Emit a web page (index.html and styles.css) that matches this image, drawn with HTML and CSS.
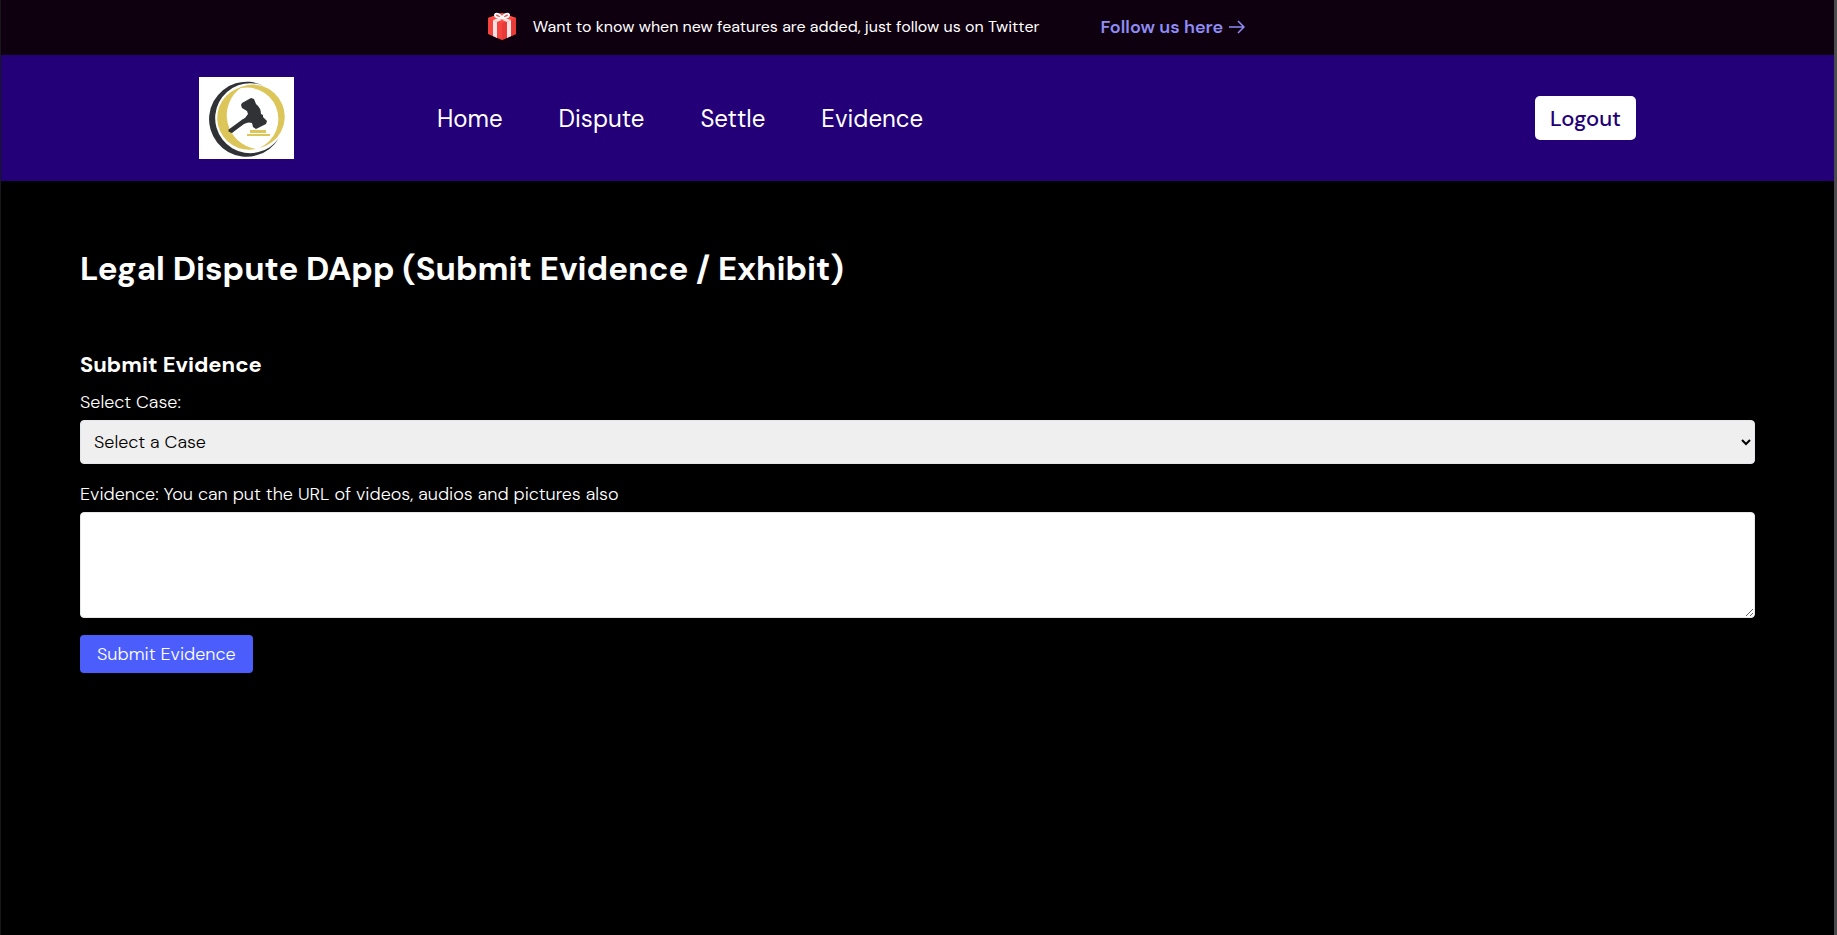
FILE: index.html
```html
<!DOCTYPE html>
<html lang="en">
<head>
<meta charset="utf-8">
<title>Legal Dispute DApp</title>
<link rel="stylesheet" href="styles.css">
</head>
<body>
<div class="page">
  <aside class="banner">
    <svg class="gift" viewBox="0 0 28 29" aria-hidden="true">
      <path fill="#f5443f" d="M0 6 14 1 28 6V22L14 28 0 22Z"/>
      <path fill="#e93a37" d="M14 11 28 6V22L14 28Z"/>
      <path fill="#fb4a42" d="M0 6 14 1 28 6 14 11Z"/>
      <path fill="#f6e3e3" d="M5 8 9 10V26L5 24ZM19 10 23 8V24L19 26Z"/>
      <path fill="#f6e3e3" d="M5 8 14 5 18 6 9 10ZM23 8 14 5 10 6 19 10Z"/>
      <path fill="none" stroke="#fff" stroke-width="2" stroke-linejoin="round" d="M14 6C10 6 7 5 7 3S12 1 14 6C16 1 21 1 21 3S18 6 14 6Z"/>
    </svg>
    <p class="banner-text">Want to know when new features are added, just follow us on Twitter</p>
    <a class="banner-link" href="#">Follow us here
      <svg class="arrow" viewBox="0 0 16 14" aria-hidden="true"><path d="M0 7H15M9 1 15 7 9 13"/></svg>
    </a>
  </aside>
  <header class="header">
    <div class="header-inner">
      <a class="logo" href="#" aria-label="Home page">
        <svg viewBox="0 0 95 82" aria-hidden="true">
          <path fill="#303236" d="M65 9A37.500 37.500 0 1 0 80 61A35 35 0 1 1 65 9Z"/>
          <path fill="#dcc65a" d="M36 13A32 32 0 1 1 60 71A31.200 31.200 0 1 0 36 13Z"/>
          <path fill="#dcc65a" d="M43 10A31.500 31.500 0 0 0 57 72A34 34 0 0 1 43 10Z"/>
          <path fill="#303236" d="M42 28 43 26 52 21 55 22 57 27Q62 31 62 37L64 38V40L68 44 67 47 57 52 54 50 53 46 47 45 33 56 32 55 29 55 32 53 46 41 49 37 48 34 43 31Z"/>
          <path fill="#303236" d="M29 53 44 42 50 40 53 44 45 47 32 56Z"/>
          <path fill="#dcc65a" d="M51 53H67V56H51ZM48 57H71V59H48Z"/>
        </svg>
      </a>
      <nav class="nav">
        <a href="#">Home</a>
        <a href="#">Dispute</a>
        <a href="#">Settle</a>
        <a href="#">Evidence</a>
      </nav>
      <button class="logout" type="button">Logout</button>
    </div>
  </header>
  <main class="content">
    <h1 class="title">Legal Dispute DApp (Submit Evidence / Exhibit)</h1>
    <form class="form">
      <h2 class="subtitle">Submit Evidence</h2>
      <label class="label" for="case">Select Case:</label>
      <select class="field select" id="case"><option>Select a Case</option></select>
      <label class="label" for="evidence">Evidence: You can put the URL of videos, audios and pictures also</label>
      <textarea class="field textarea" id="evidence"></textarea>
      <button class="submit" type="button">Submit Evidence</button>
    </form>
  </main>
</div>
</body>
</html>
```
FILE: styles.css
```css
* { box-sizing: border-box; }
body {
  margin: 0;
  background: #000;
  color: #fff;
  font-family: "DM Sans", Inter, sans-serif;
  font-size: 18px;
  font-weight: 300;
  font-optical-sizing: none;
}
a { text-decoration: none; }
.page {
  min-height: 100vh;
  border-left: 1px solid #17171c;
  border-right: 3px solid #4b4a4d;
}
.banner {
  display: flex;
  align-items: center;
  justify-content: center;
  height: 55px;
  padding: 0 102px 2px 0;
  background: #0f0010;
}
.gift { width: 28px; height: 29px; margin-right: 17px; }
.banner-text { margin: 0 61px 0 0; font-size: 16px; font-weight: 400; font-optical-sizing: auto; }
.banner-link {
  display: flex;
  align-items: center;
  gap: 6px;
  color: #8f8df5;
  font-weight: 600;
}
.arrow { width: 16px; height: 14px; fill: none; stroke: currentColor; stroke-width: 1.5; }
.header { padding: 22px 198px; background: #230078; }
.header-inner { display: flex; align-items: center; }
.logo { display: block; width: 95px; height: 82px; background: #fff; }
.nav { display: flex; gap: 56px; margin-left: 143px; }
.nav a { color: #fff; font-size: 24px; font-weight: 400; }
.logout {
  height: 44px;
  margin-left: auto;
  padding: 0 15px;
  border: 0;
  border-radius: 5px;
  background: #fff;
  color: #230078;
  font: 500 22px "DM Sans", Inter, sans-serif;
  font-optical-sizing: none;
}
.content { padding: 64px 79px; }
.title { margin: 0 0 56px; font-size: 33px; line-height: 48px; font-weight: 700; }
.form { display: flex; flex-direction: column; align-items: flex-start; }
.subtitle { margin: 0 0 9px; font-size: 22px; line-height: 32px; font-weight: 700; }
.label { margin-bottom: 6px; line-height: 24px; }
.field {
  width: 100%;
  margin: 0 0 18px;
  padding: 8px 9px;
  border: 1px solid #e5e7eb;
  border-radius: 4px;
  color: #000;
  font: 300 18px "DM Sans", Inter, sans-serif;
  font-optical-sizing: none;
}
.select { height: 44px; background-color: #efefef; }
.textarea { height: 106px; margin-bottom: 17px; background: #fff; resize: vertical; }
.submit {
  height: 38px;
  padding: 0 17px;
  border: 0;
  border-radius: 4px;
  background: #4b5efc;
  color: #fff;
  font: 300 18px "DM Sans", Inter, sans-serif;
  font-optical-sizing: none;
}
```
